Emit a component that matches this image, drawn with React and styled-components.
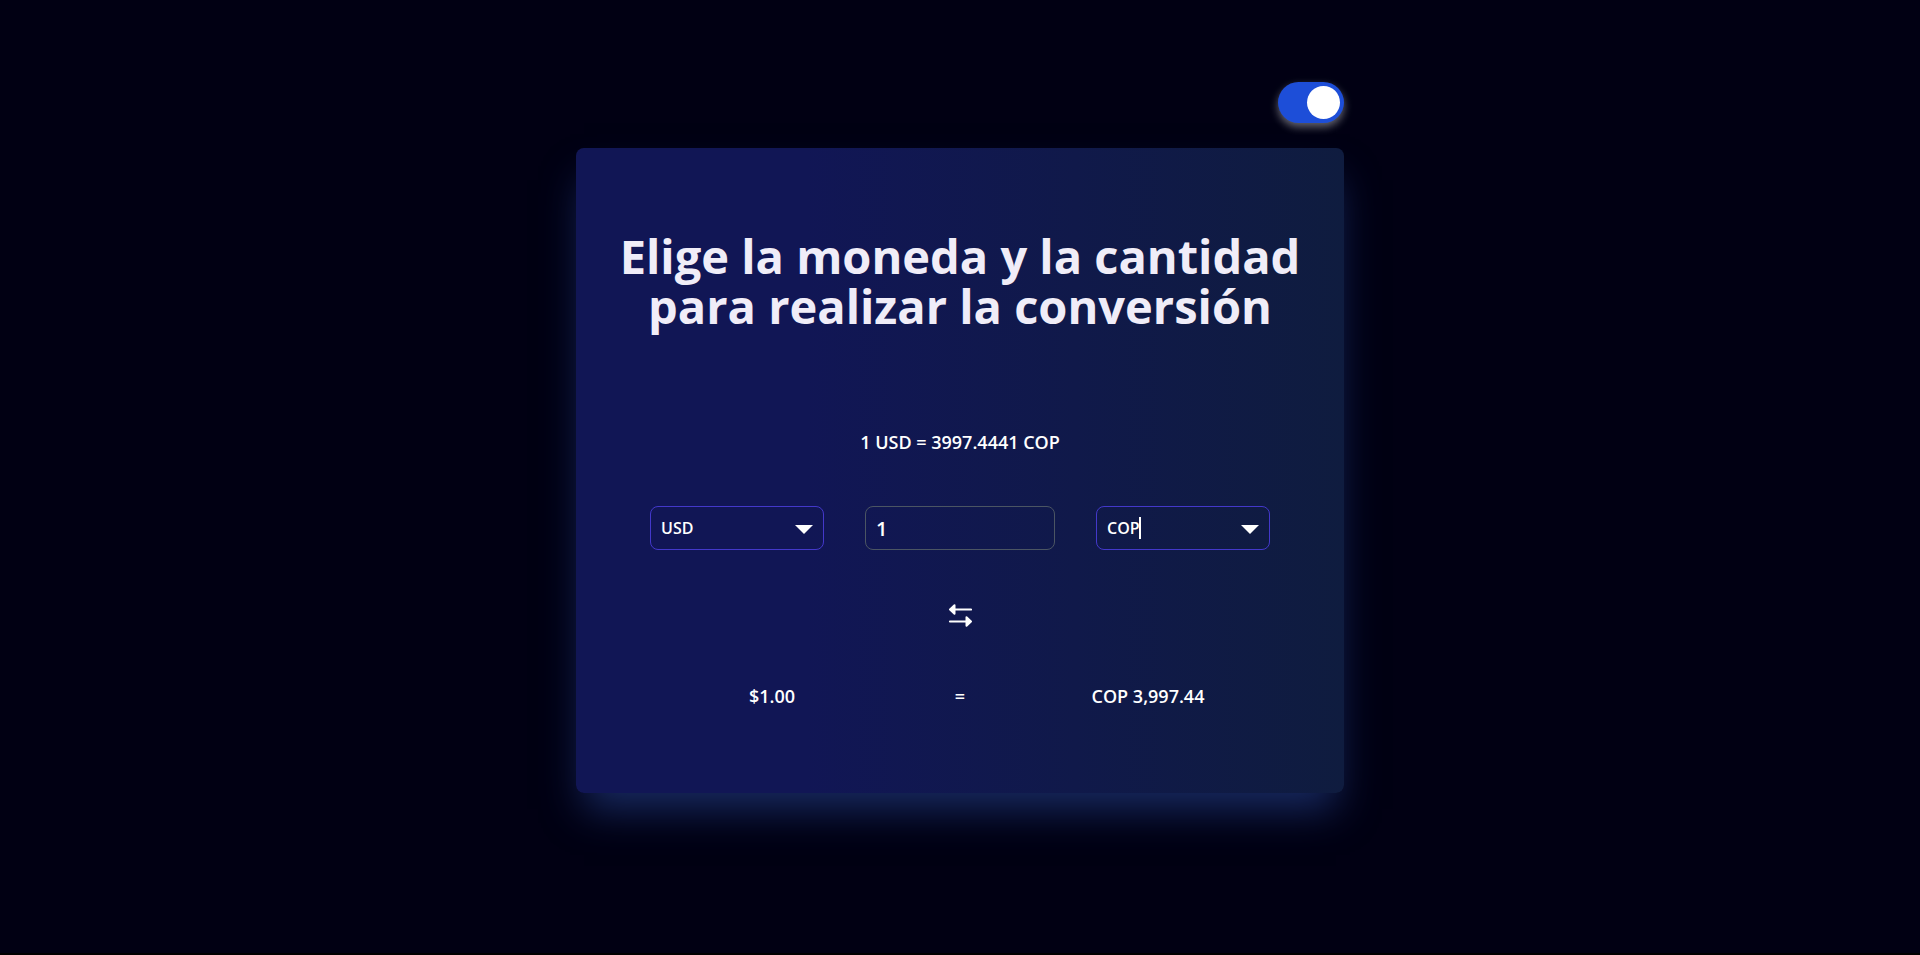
import React, { useState } from "react";
import styled, { createGlobalStyle } from "styled-components";

const GlobalStyle = createGlobalStyle`
  *, *::before, *::after { box-sizing: border-box; }
  html { background: #000; }
  body {
    margin: 0;
    font-family: "Open Sans", "Noto Sans", sans-serif;
    color: #f0edf8;
  }
  h1, p { margin: 0; }
`;

const Page = styled.main`
  min-height: calc(100vh - 2px);
  padding: 82px 24px 48px;
  display: flex;
  flex-direction: column;
  align-items: center;
  background: #010013;
`;

const Content = styled.div`
  width: 100%;
  max-width: 768px;
  display: flex;
  flex-direction: column;
  gap: 25px;
`;

const Switch = styled.label`
  align-self: flex-end;
  width: 66px;
  height: 41px;
  padding: 4px;
  display: flex;
  justify-content: ${({ $on }) => ($on ? "flex-end" : "flex-start")};
  border-radius: 24px;
  background: ${({ $on }) => ($on ? "#1d4ed8" : "#64748b")};
  box-shadow: 0 4px 8px rgba(255, 255, 255, 0.4);
  cursor: pointer;
`;

const SwitchInput = styled.input`
  appearance: none;
  width: 33px;
  height: 33px;
  margin: 0;
  border-radius: 50%;
  background: #fff;
  cursor: pointer;
`;

const Card = styled.section`
  padding: 83px 24px 83px;
  display: flex;
  flex-direction: column;
  align-items: center;
  border-radius: 8px;
  background: linear-gradient(to right, #111655 0%, #111655 30%, #0f1c3f 100%);
  box-shadow: 0 24px 38px -8px rgba(32, 56, 124, 0.75);
`;

const Title = styled.h1`
  font-size: 47px;
  line-height: 50px;
  font-weight: 700;
  text-align: center;
`;

const Rate = styled.p`
  margin-top: 97px;
  font-size: 18px;
  line-height: 28px;
  font-weight: 600;
  color: #fff;
`;

const Fields = styled.div`
  margin-top: 50px;
  display: flex;
  flex-wrap: wrap;
  justify-content: center;
  gap: 41px;
`;

const Field = styled.div`
  position: relative;
  width: ${({ $wide }) => ($wide ? "190px" : "174px")};
`;

const TextBox = styled.input`
  display: block;
  width: 100%;
  height: 44px;
  padding: 0 10px;
  border: 1px solid ${({ $muted }) => ($muted ? "#4b5563" : "#4338ca")};
  border-radius: 8px;
  outline: none;
  background: transparent;
  color: #fff;
  font-family: inherit;
  font-size: ${({ $muted }) => ($muted ? "20px" : "16px")};
  font-weight: 600;
  &::-webkit-calendar-picker-indicator { display: none !important; }
`;

const Arrow = styled.svg`
  position: absolute;
  top: 19px;
  right: 11px;
  width: 18px;
  height: 9px;
  pointer-events: none;
`;

const Caret = styled.span`
  position: absolute;
  top: 11px;
  left: 43px;
  width: 2px;
  height: 22px;
  background: #fff;
  pointer-events: none;
`;

const SwapButton = styled.button`
  margin-top: 50px;
  padding: 4px;
  display: flex;
  border: 0;
  background: none;
  color: #fff;
  cursor: pointer;
`;

const Results = styled.div`
  width: 100%;
  max-width: 564px;
  margin-top: 50px;
  display: grid;
  grid-template-columns: repeat(3, 1fr);
  text-align: center;
  font-size: 18px;
  line-height: 28px;
  font-weight: 600;
  color: #fff;
`;

function CurrencyField({ label, value, onChange, editing }) {
  return (
    <Field>
      <TextBox
        type="text"
        list="currencies"
        aria-label={label}
        value={value}
        onChange={(event) => onChange(event.target.value)}
      />
      {editing && <Caret />}
      <Arrow viewBox="0 0 18 9" aria-hidden="true">
        <path d="M0 0h18L9 9z" fill="#fff" />
      </Arrow>
    </Field>
  );
}

export default function App() {
  const [dark, setDark] = useState(true);
  const [from, setFrom] = useState("USD");
  const [to, setTo] = useState("COP");
  const [amount, setAmount] = useState("1");

  const swap = () => {
    setFrom(to);
    setTo(from);
  };

  return (
    <>
      <GlobalStyle />
      <Page>
        <Content>
          <Switch $on={dark}>
            <SwitchInput
              type="checkbox"
              role="switch"
              aria-label="Modo oscuro"
              checked={dark}
              onChange={() => setDark(!dark)}
            />
          </Switch>
          <Card>
            <Title>Elige la moneda y la cantidad para realizar la conversión</Title>
            <Rate>1 USD = 3997.4441 COP</Rate>
            <Fields>
              <CurrencyField label="Moneda de origen" value={from} onChange={setFrom} />
              <Field $wide>
                <TextBox
                  $muted
                  type="text"
                  inputMode="decimal"
                  aria-label="Cantidad"
                  value={amount}
                  onChange={(event) => setAmount(event.target.value)}
                />
              </Field>
              <CurrencyField label="Moneda de destino" value={to} onChange={setTo} editing />
            </Fields>
            <datalist id="currencies">
              <option value="USD" />
              <option value="COP" />
            </datalist>
            <SwapButton type="button" aria-label="Intercambiar monedas" onClick={swap}>
              <svg width="24" height="24" viewBox="0 0 24 24" fill="currentColor" stroke="currentColor">
                <path d="M23 5.500H5M2 17.500h18" fill="none" strokeWidth="2.200" strokeLinecap="round" />
                <path d="M2 5.500L6.500 1.200v8.600zM23 17.500L18.500 13.200v8.600z" strokeWidth="2" strokeLinejoin="round" />
              </svg>
            </SwapButton>
            <Results>
              <span>$1.00</span>
              <span>=</span>
              <span>COP 3,997.44</span>
            </Results>
          </Card>
        </Content>
      </Page>
    </>
  );
}
